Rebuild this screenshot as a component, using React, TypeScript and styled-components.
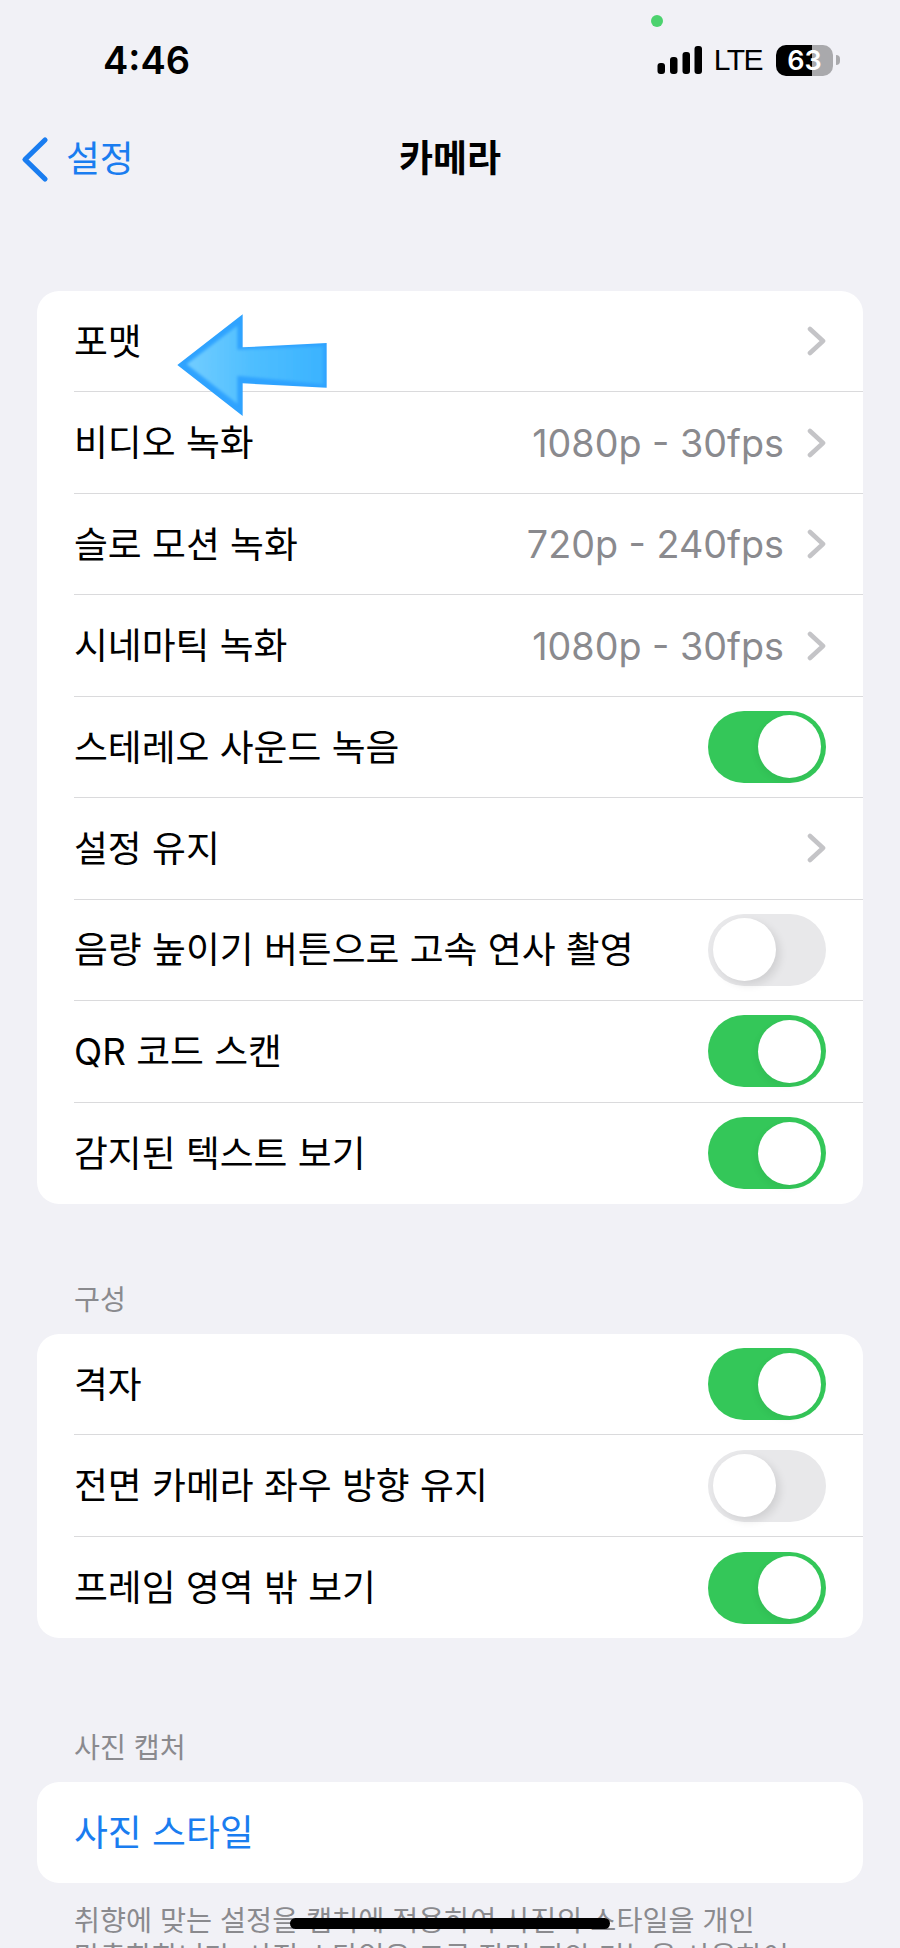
import React from 'react'
import styled, { createGlobalStyle } from 'styled-components'

const GlobalStyle = createGlobalStyle`
  html, body {
    margin: 0;
    padding: 0;
    background: #F1F1F6;
  }
  * {
    box-sizing: border-box;
  }
`

type Item = { label: string; value?: string; chevron?: boolean; on?: boolean }

const cameraRows: Item[] = [
  { label: '포맷', chevron: true },
  { label: '비디오 녹화', value: '1080p - 30fps', chevron: true },
  { label: '슬로 모션 녹화', value: '720p - 240fps', chevron: true },
  { label: '시네마틱 녹화', value: '1080p - 30fps', chevron: true },
  { label: '스테레오 사운드 녹음', on: true },
  { label: '설정 유지', chevron: true },
  { label: '음량 높이기 버튼으로 고속 연사 촬영', on: false },
  { label: 'QR 코드 스캔', on: true },
  { label: '감지된 텍스트 보기', on: true },
]

const compositionRows: Item[] = [
  { label: '격자', on: true },
  { label: '전면 카메라 좌우 방향 유지', on: false },
  { label: '프레임 영역 밖 보기', on: true },
]

const SettingsRow = ({ item }: { item: Item }) => (
  <Row>
    <RowLabel>{item.label}</RowLabel>
    {item.value && <RowValue>{item.value}</RowValue>}
    {item.chevron && (
      <Chevron width="20" height="32" viewBox="0 0 20 32">
        <path d="M3 4 L16 16 L3 28" fill="none" stroke="#C4C4C7" strokeWidth="4.6" strokeLinecap="round" strokeLinejoin="round" />
      </Chevron>
    )}
    {item.on !== undefined && (
      <Toggle $on={item.on}>
        <Knob $on={item.on} />
      </Toggle>
    )}
  </Row>
)

const App: React.FC = () => {
  return (
    <Screen>
      <GlobalStyle />
      <GreenDot />
      <StatusBar>
        <Time>4:46</Time>
        <StatusIcons>
          <svg width="46" height="30" viewBox="0 0 46 30">
            <rect x="0.5" y="18" width="7.5" height="11" rx="3" fill="#000" />
            <rect x="13" y="12" width="7.5" height="17" rx="3" fill="#000" />
            <rect x="25.5" y="7" width="7.5" height="22" rx="3" fill="#000" />
            <rect x="37.5" y="1" width="7.5" height="28" rx="3" fill="#000" />
          </svg>
          <Network>LTE</Network>
          <Battery>63</Battery>
          <BatteryNub />
        </StatusIcons>
      </StatusBar>

      <NavBar>
        <BackLink>
          <svg width="29" height="47" viewBox="0 0 29 47">
            <path d="M25 4 L5 23.5 L25 43" fill="none" stroke="#1A7DF0" strokeWidth="5.2" strokeLinecap="round" strokeLinejoin="round" />
          </svg>
          <BackLabel>설정</BackLabel>
        </BackLink>
        <NavTitle>카메라</NavTitle>
      </NavBar>

      <FirstCard>
        {cameraRows.map((item) => (
          <SettingsRow key={item.label} item={item} />
        ))}
      </FirstCard>

      <SectionHeader $gap={78}>구성</SectionHeader>
      <Card>
        {compositionRows.map((item) => (
          <SettingsRow key={item.label} item={item} />
        ))}
      </Card>

      <SectionHeader $gap={91.6}>사진 캡처</SectionHeader>
      <Card>
        <Row>
          <LinkLabel>사진 스타일</LinkLabel>
        </Row>
      </Card>

      <Footnote>
        취향에 맞는 설정을 캡처에 적용하여 사진의 스타일을 개인
        <br />
        맞춤화합니다. 사진 스타일은 고급 장면 파악 기능을 사용하여
      </Footnote>

      <PointerArrow width="170" height="120" viewBox="0 0 510 360">
        <defs>
          <linearGradient id="arrowFill" x1="0" y1="0" x2="1" y2="0">
            <stop offset="0" stopColor="#72CDFF" />
            <stop offset="0.45" stopColor="#50BFFF" />
            <stop offset="1" stopColor="#3BB3FF" />
          </linearGradient>
          <filter id="arrowSoft" x="-5%" y="-5%" width="110%" height="110%">
            <feGaussianBlur stdDeviation="4" />
          </filter>
        </defs>
        <polygon points="22,180 218,28 218,127 470,114 470,248 218,235 218,333" fill="#2FA3FF" />
        <polygon points="50,178 202,62 202,134 460,124 460,238 202,212 202,296" fill="url(#arrowFill)" filter="url(#arrowSoft)" />
      </PointerArrow>

      <HomeBar />
    </Screen>
  )
}

const Screen = styled.div`
  position: relative;
  width: 900px;
  height: 1948px;
  overflow: hidden;
  background: #F1F1F6;
  font-family: Inter, 'Noto Sans CJK KR', sans-serif;
  color: #000;
`
const GreenDot = styled.div`
  position: absolute;
  left: 651px;
  top: 15px;
  width: 12px;
  height: 12px;
  border-radius: 50%;
  background: #4CD26E;
`
const StatusBar = styled.div`
  display: flex;
  align-items: center;
  justify-content: space-between;
  height: 120px;
  padding: 0 60px 0 103px;
`
const Time = styled.div`
  font-size: 38px;
  font-weight: 600;
  line-height: 1;
`
const StatusIcons = styled.div`
  display: flex;
  align-items: center;
`
const Network = styled.div`
  margin-left: 11px;
  font-family: 'Liberation Sans', sans-serif;
  font-size: 30px;
  letter-spacing: -1.5px;
  line-height: 1;
`
const Battery = styled.div`
  width: 57px;
  height: 31px;
  margin-left: 14px;
  border-radius: 10px;
  background: linear-gradient(90deg, #000 63%, #A9A9AC 63%);
  color: #fff;
  font-size: 27px;
  font-weight: 600;
  line-height: 31px;
  text-align: center;
`
const BatteryNub = styled.div`
  width: 4px;
  height: 10px;
  margin-left: 3px;
  border-radius: 0 5px 5px 0;
  background: #A9A9AC;
`
const NavBar = styled.div`
  position: relative;
  display: flex;
  align-items: center;
  justify-content: center;
  height: 76px;
`
const BackLink = styled.div`
  position: absolute;
  left: 20px;
  top: 16px;
  display: flex;
  align-items: center;
  gap: 17px;
  color: #1A7DF0;
`
const BackLabel = styled.div`
  font-size: 36.8px;
  line-height: 1;
`
const NavTitle = styled.div`
  font-size: 37px;
  font-weight: 700;
  line-height: 1;
`
const Card = styled.div`
  margin: 0 37px;
  border-radius: 22px;
  background: #fff;
`
const FirstCard = styled(Card)`
  margin-top: 95px;
`
const Row = styled.div`
  display: flex;
  align-items: center;
  height: 101.45px;
  margin-left: 37px;
  padding-right: 37px;
  border-bottom: 1.5px solid #DADADC;
  &:last-child {
    border-bottom: none;
  }
`
const RowLabel = styled.div`
  flex: 1;
  padding-top: 2px;
  font-size: 36.8px;
  line-height: 1;
`
const LinkLabel = styled(RowLabel)`
  color: #1A7DF0;
`
const RowValue = styled.div`
  padding-top: 2px;
  color: #8A8A8E;
  font-size: 37.7px;
  line-height: 1;
`
const Chevron = styled.svg`
  margin-left: 23px;
  margin-right: -1px;
`
const Toggle = styled.div<{ $on: boolean }>`
  display: flex;
  justify-content: ${(p) => (p.$on ? 'flex-end' : 'flex-start')};
  align-items: center;
  width: 118px;
  height: 72px;
  padding: 0 5px;
  border-radius: 36px;
  background: ${(p) => (p.$on ? '#34C759' : '#E8E8EA')};
`
const Knob = styled.div<{ $on: boolean }>`
  width: 63px;
  height: 63px;
  border-radius: 50%;
  background: #fff;
  box-shadow: ${(p) => (p.$on ? '-2px 3px 7px rgba(0, 0, 0, 0.05)' : '4px 4px 8px rgba(0, 0, 0, 0.1)')};
`
const SectionHeader = styled.div<{ $gap: number }>`
  margin: ${(p) => p.$gap}px 74px 0;
  padding-top: 1px;
  height: 52px;
  color: #8A8A8E;
  font-size: 28.2px;
  line-height: 34px;
`
const Footnote = styled.div`
  margin: 20px 74px 0;
  color: #8A8A8E;
  font-size: 28.3px;
  line-height: 36px;
  white-space: nowrap;
`
const PointerArrow = styled.svg`
  position: absolute;
  left: 170px;
  top: 305px;
`
const HomeBar = styled.div`
  position: absolute;
  left: 290px;
  top: 1918px;
  width: 320px;
  height: 11px;
  border-radius: 6px;
  background: #000;
`

export default App
